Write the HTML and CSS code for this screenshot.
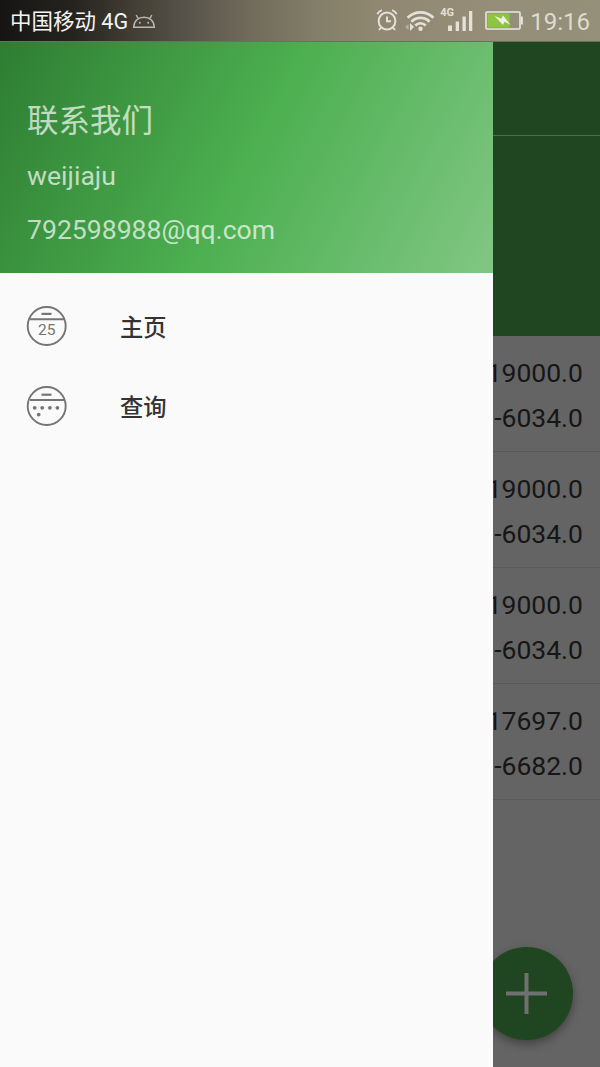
FILE: index.html
```html
<!DOCTYPE html>
<html lang="zh-CN">
<head>
    <meta charset="UTF-8">
    <meta name="viewport" content="width=device-width, initial-scale=1.0">
    <title>主页</title>
    <link rel="stylesheet" href="styles.css">
</head>
<body>

    <header class="status-bar">
        <span class="carrier">中国移动 4G</span>
        <svg class="android" width="24" height="16" viewBox="0 0 24 16" fill="none" stroke="#b9b8b4" stroke-width="1.4">
            <path d="M1.700 14.300C2 7.800 6.300 4.200 12 4.200s10 3.600 10.300 10.100zM6.200 5.600L4.200 2M17.800 5.600L19.800 2"/>
            <circle cx="7.800" cy="9.800" r="1" fill="#b9b8b4" stroke="none"/>
            <circle cx="16.200" cy="9.800" r="1" fill="#b9b8b4" stroke="none"/>
        </svg>
        <div class="status-icons">
            <svg class="alarm" width="22" height="23" viewBox="0 0 22 23" fill="none" stroke="#e3e1da" stroke-width="2">
                <circle cx="11" cy="12" r="8.400"/>
                <path d="M11 7.500V12.300H15M1.300 5.200C2.300 3 3.800 1.700 6 1.100M20.700 5.200C19.700 3 18.200 1.700 16 1.100M5 18.500L3 21M17 18.500L19 21"/>
            </svg>
            <svg class="wifi" width="31" height="22" viewBox="0 0 31 22" fill="none" stroke="#e3e1da" stroke-width="2.700">
                <path d="M3.600 7.700C11 .5 22 .5 29.400 7.700M7.400 11.700C12.500 6.700 20.500 6.700 25.600 11.700M11.300 15.500C14.300 12.500 18.700 12.500 21.700 15.500"/>
                <circle cx="16.500" cy="18.800" r="2.200" fill="#e3e1da" stroke="none"/>
                <path d="M6 13v8l4-4z" fill="#e3e1da" stroke="none"/>
                <path d="M4.500 14v6L1 17z" fill="#b5b1a1" stroke="none"/>
            </svg>
            <div class="signal">
                <span class="network">4G</span>
                <svg width="26" height="21" viewBox="0 0 26 21" fill="#e3e1da">
                    <path d="M1 15.500h4V21H1zM8.700 11.500h3.300V21H8.700zM15.500 6.500h3.300V21h-3.300zM22 1h3.300v20H22z"/>
                </svg>
            </div>
            <svg class="battery" width="38" height="19" viewBox="0 0 38 19">
                <rect x="1" y="1" width="34" height="17" rx="1" fill="none" stroke="#e9e7e0" stroke-width="1.600"/>
                <path d="M36 5.500h1.800v8H36z" fill="#e9e7e0"/>
                <path d="M2.500 2.500h22v14h-22z" fill="#8cc63f"/>
                <path d="M9.500 5l7 2.800 1.500-3.300 7.500 9.300-6-3-1.500 3.200z" fill="#f1f0e7"/>
            </svg>
            <time class="clock">19:16</time>
        </div>
    </header>

    <div class="screen">
        <nav class="drawer">
            <div class="drawer-header">
                <h1>联系我们</h1>
                <p>weijiaju</p>
                <p>792598988@qq.com</p>
            </div>
            <ul class="menu">
                <li>
                    <svg width="42" height="42" viewBox="0 0 42 42" fill="none" stroke="#757575" stroke-width="1.900">
                        <circle cx="20.700" cy="21" r="19"/>
                        <path d="M4 14.300h34"/>
                        <path d="M15.500 8.900h10" stroke-width="2.200"/>
                        <text class="day" x="20.700" y="30" text-anchor="middle">25</text>
                    </svg>
                    <span>主页</span>
                </li>
                <li>
                    <svg width="42" height="42" viewBox="0 0 42 42" fill="none" stroke="#757575" stroke-width="1.900">
                        <circle cx="20.700" cy="21" r="19"/>
                        <path d="M4 15h34"/>
                        <path d="M15.500 9.700h10" stroke-width="2.200"/>
                        <g fill="#757575" stroke="none">
                            <circle cx="8.700" cy="22.800" r="1.900"/>
                            <circle cx="16.200" cy="22.800" r="1.900"/>
                            <circle cx="23.900" cy="22.800" r="1.900"/>
                            <circle cx="31.400" cy="22.800" r="1.900"/>
                            <circle cx="12.700" cy="29.600" r="1.900"/>
                        </g>
                    </svg>
                    <span>查询</span>
                </li>
            </ul>
        </nav>

        <main class="page">
            <div class="toolbar"></div>
            <div class="summary"></div>
            <ul class="records">
                <li><span>19000.0</span><span>-6034.0</span></li>
                <li><span>19000.0</span><span>-6034.0</span></li>
                <li><span>19000.0</span><span>-6034.0</span></li>
                <li><span>17697.0</span><span>-6682.0</span></li>
            </ul>
            <button class="fab" aria-label="添加">
                <svg width="42" height="42" viewBox="0 0 42 42" stroke="#707070" stroke-width="4">
                    <path d="M20.500 0v41M0 20.500h41"/>
                </svg>
            </button>
        </main>
    </div>

</body>
</html>
```

FILE: styles.css
```css
* {
    box-sizing: border-box;
    margin: 0;
    padding: 0;
}
body {
    display: flex;
    flex-direction: column;
    height: 1067px;
    overflow: hidden;
    font-family: Roboto, "Noto Sans CJK SC", sans-serif;
}
ul {
    list-style: none;
}
svg {
    display: block;
    flex-shrink: 0;
}

/* status bar */
.status-bar {
    display: flex;
    align-items: center;
    height: 42px;
    padding: 0 10px;
    background: linear-gradient(90deg, #161514 0%, #25231f 12%, #444036 23%, #57534a 31%, #716c5b 42%, #858069 54%, #8f8770 62%, #958d78 80%, #949079 100%);
    border-bottom: 1px solid #6a7059;
    color: #f4f4f4;
}
.carrier {
    font-size: 21.5px;
    line-height: 40px;
    padding-top: 2px;
    white-space: nowrap;
}
.android {
    margin-left: 4px;
}
.status-icons {
    display: flex;
    align-items: center;
    margin-left: auto;
}
.wifi {
    margin-left: 6px;
}
.signal {
    display: flex;
    align-items: flex-end;
    height: 26px;
    margin: -6px 0 0 5px;
}
.network {
    width: 14px;
    margin-right: -7px;
    align-self: flex-start;
    font-size: 11px;
    font-weight: 700;
    line-height: 15px;
    color: #e3e1da;
}
.battery {
    margin-left: 12px;
}
.clock {
    margin-left: 7px;
    font-size: 24px;
    line-height: 42px;
    padding-top: 2px;
    color: #dedbd1;
}

.screen {
    display: flex;
    flex: 1;
    min-height: 0;
}

/* drawer */
.drawer {
    width: 493px;
    flex-shrink: 0;
    background: #fafafa;
}
.drawer-header {
    height: 231px;
    padding: 59px 27px 0;
    background: linear-gradient(118deg, #2e7d32, #4caf50 50%, #81c784);
    color: rgba(255, 255, 255, 0.7);
}
.drawer-header h1 {
    font-size: 31.5px;
    font-weight: 400;
    line-height: 42px;
}
.drawer-header p {
    margin-top: 16px;
    font-size: 26.6px;
    line-height: 34px;
}
.drawer-header p + p {
    margin-top: 20px;
}
.menu {
    padding-top: 13px;
}
.menu li {
    display: flex;
    align-items: center;
    gap: 52px;
    height: 80px;
    padding-left: 26px;
    font-size: 23.3px;
    font-weight: 500;
    color: #333;
}
.day {
    fill: #757575;
    stroke: none;
    font-size: 15.5px;
    font-weight: 400;
}

/* dimmed page behind the drawer */
.page {
    position: relative;
    flex: 1;
    overflow: hidden;
    background: #646464;
}
.toolbar {
    height: 94px;
    background: #1f4621;
    border-bottom: 1px solid #4f6b50;
}
.summary {
    height: 200px;
    background: #1f4621;
}
.records li {
    display: flex;
    flex-direction: column;
    align-items: flex-end;
    height: 116px;
    padding: 14px 17px 0 0;
    border-bottom: 1px solid #595959;
    font-size: 26.5px;
    line-height: 45px;
    color: #161616;
}
.fab {
    position: absolute;
    right: 27px;
    bottom: 27px;
    display: flex;
    align-items: center;
    justify-content: center;
    width: 93px;
    height: 93px;
    border: none;
    border-radius: 50%;
    background: #1f4621;
    box-shadow: 0 4px 10px rgba(0, 0, 0, 0.35);
}
```
